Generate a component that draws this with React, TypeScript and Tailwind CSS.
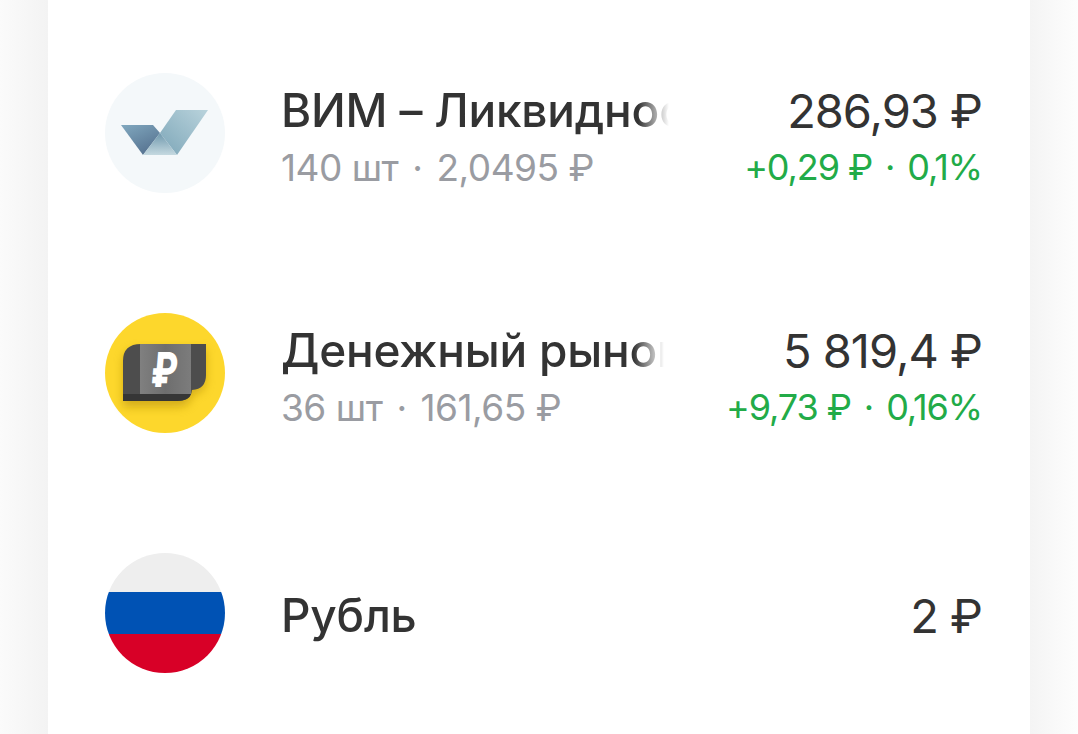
const font = { fontFamily: "Inter, 'Noto Sans', sans-serif" };

function VimLogo() {
  return (
    <svg viewBox="0 0 120 120" className="h-[120px] w-[120px] shrink-0">
      <defs>
        <linearGradient id="vimLeft" x1="0.1" y1="0" x2="0.7" y2="1">
          <stop offset="0" stopColor="#7fa6bd" />
          <stop offset="1" stopColor="#55718f" />
        </linearGradient>
        <linearGradient id="vimMid" x1="0.5" y1="0" x2="0.5" y2="1">
          <stop offset="0" stopColor="#6f98ad" />
          <stop offset="1" stopColor="#c5d9e0" />
        </linearGradient>
        <linearGradient id="vimRight" x1="1" y1="0" x2="0" y2="1">
          <stop offset="0" stopColor="#b9d3dc" />
          <stop offset="1" stopColor="#7da6b8" />
        </linearGradient>
      </defs>
      <circle cx="60" cy="60" r="60" fill="#f4f8fa" />
      <polygon points="16,52 48,52 55,60 38,82" fill="url(#vimLeft)" />
      <polygon points="71,37 103,37 72,82 55,60" fill="url(#vimRight)" />
      <polygon points="55,60 72,82 38,82" fill="url(#vimMid)" />
    </svg>
  );
}

function MoneyLogo() {
  return (
    <svg viewBox="0 0 120 120" className="h-[120px] w-[120px] shrink-0">
      <defs>
        <linearGradient id="moneyPanel" x1="0" y1="0" x2="1" y2="0">
          <stop offset="0" stopColor="#808080" />
          <stop offset="0.5" stopColor="#6e6e6e" />
          <stop offset="1" stopColor="#7c7c7c" />
        </linearGradient>
        <filter id="moneyShadow" x="-20%" y="-20%" width="140%" height="150%">
          <feGaussianBlur stdDeviation="5" />
        </filter>
      </defs>
      <circle cx="60" cy="60" r="60" fill="#fdd72c" />
      <path d="M18 50 Q18 36 36 36 L101 36 L101 66 Q101 80 87 81 Q86 94 72 94 L18 94 Z" fill="#b8920f" opacity="0.6" filter="url(#moneyShadow)" />
      <path d="M18 48 Q18 31 36 31 L101 31 L101 62 Q101 76 87 77 Q86 88 72 88 L18 88 Z" fill="#4d4d4d" />
      <path d="M18 81 L86 81 Q84 88 72 88 L18 88 Z" fill="#363636" />
      <rect x="35" y="31" width="51" height="50" fill="url(#moneyPanel)" />
      <text
        x="0"
        y="0"
        transform="translate(58 74) skewX(-5) scale(0.72 1)"
        textAnchor="middle"
        fontSize="48"
        fontWeight="800"
        fill="#ffffff"
        fontFamily="Inter, sans-serif"
      >
        ₽
      </text>
    </svg>
  );
}

function FlagLogo() {
  return (
    <div className="flex h-[120px] w-[120px] shrink-0 flex-col overflow-hidden rounded-full">
      <div className="h-[39px] bg-[#eeeeee]" />
      <div className="h-[42px] bg-[#0052b4]" />
      <div className="flex-1 bg-[#d80027]" />
    </div>
  );
}

type Row = {
  icon: React.ReactNode;
  name: string;
  nameWidth: string;
  sub?: [string, string];
  value: string;
  change?: [string, string];
};

const rows: Row[] = [
  {
    icon: <VimLogo />,
    name: "ВИМ – Ликвидность",
    nameWidth: "w-[388px]",
    sub: ["140 шт", "2,0495 ₽"],
    value: "286,93 ₽",
    change: ["+0,29 ₽", "0,1%"],
  },
  {
    icon: <MoneyLogo />,
    name: "Денежный рынок",
    nameWidth: "w-[383px]",
    sub: ["36 шт", "161,65 ₽"],
    value: "5 819,4 ₽",
    change: ["+9,73 ₽", "0,16%"],
  },
  {
    icon: <FlagLogo />,
    name: "Рубль",
    nameWidth: "w-[388px]",
    value: "2 ₽",
  },
];

export default function App() {
  return (
    <div className="flex h-screen w-full overflow-hidden bg-white" style={font}>
      <div className="w-[48px] shrink-0 bg-gradient-to-r from-[#fbfbfb] to-[#f3f3f3]" />
      <div className="flex min-w-0 flex-1 flex-col gap-[120px] bg-white pl-[57px] pr-[48px] pt-[73px]">
        {rows.map((row) => (
          <div key={row.name} className="flex h-[120px] items-center justify-between">
            <div className="flex min-w-0 items-center gap-[56px]">
              {row.icon}
              <div className={row.sub ? "pt-[6px]" : "pt-[4px]"}>
                <div
                  className={`${row.nameWidth} overflow-hidden whitespace-nowrap text-[46px] font-[450] leading-[57px] tracking-[-0.2px] text-[#333333] [mask-image:linear-gradient(to_right,black_92%,transparent)]`}
                >
                  {row.name}
                </div>
                {row.sub && (
                  <div className="mt-[6px] whitespace-nowrap text-[37px] leading-[45px] tracking-[-0.5px] text-[#9a9ca2]">
                    <span>{row.sub[0]}</span>
                    <span className="mx-[14px]">·</span>
                    <span>{row.sub[1]}</span>
                  </div>
                )}
              </div>
            </div>
            <div className={row.change ? "shrink-0 pt-[6px] text-right" : "shrink-0 pt-[4px] text-right"}>
              <div className="whitespace-nowrap text-[47px] leading-[57px] tracking-[-1px] text-[#333333]">{row.value}</div>
              {row.change && (
                <div className="mt-[6px] whitespace-nowrap text-[36px] leading-[45px] tracking-[-1.1px] text-[#22ab48]">
                  <span>{row.change[0]}</span>
                  <span className="mx-[13px]">·</span>
                  <span>{row.change[1]}</span>
                </div>
              )}
            </div>
          </div>
        ))}
      </div>
      <div className="w-[48px] shrink-0 bg-gradient-to-r from-[#f4f4f4] to-[#fdfdfd]" />
    </div>
  );
}
